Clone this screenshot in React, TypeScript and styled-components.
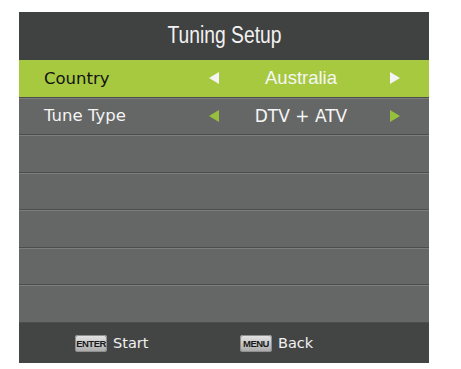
import React from 'react';
import styled, { createGlobalStyle } from 'styled-components';

const GlobalStyle = createGlobalStyle`
    html, body {
        margin: 0;
        padding: 0;
        background: #ffffff;
    }
`;

const Page = styled.div`
    width: 461px;
    height: 369px;
    padding: 12px 0 0 19px;
    box-sizing: border-box;
`;

const Panel = styled.div`
    width: 410px;
    display: flex;
    flex-direction: column;
    background: #656666;
`;

const Header = styled.div`
    height: 48px;
    display: flex;
    align-items: center;
    justify-content: center;
    background: #404141;
    padding-bottom: 2px;
    box-sizing: border-box;
`;

// narrow TV-menu face, squeezed from Liberation Sans
const Title = styled.span`
    display: inline-block;
    color: #f2f2f2;
    font-family: "Liberation Sans", Arial, sans-serif;
    font-size: 23.5px;
    transform: scaleX(0.82);
`;

const List = styled.div`
    height: 263px;
    display: grid;
    grid-template-rows: repeat(7, 1fr);
`;

const Row = styled.div<{ active?: boolean }>`
    display: grid;
    grid-template-columns: 165px 11px 1fr 11px;
    align-items: center;
    padding: 0 24px 0 25px;
    background: ${props => props.active ? '#a6c93f' : '#656666'};
    border-bottom: 1px solid #4c4d4d;
    box-shadow: inset 0 1px 0 ${props => props.active ? '#a6c93f' : '#7c7d7d'};
    color: ${props => props.active ? '#111111' : '#f4f4f4'};
    font-family: "DejaVu Sans", Verdana, sans-serif;
    font-size: 16.5px;
`;

const Value = styled.div<{ narrow?: boolean }>`
    text-align: center;
    padding-right: 12px;
    color: #f6f6f6;
    font-family: ${props => props.narrow ? '"DejaVu Sans", Verdana, sans-serif' : '"Liberation Sans", Arial, sans-serif'};
    font-size: ${props => props.narrow ? '17px' : '18.5px'};
`;

const Arrow = styled.div<{ dir: 'left' | 'right'; color: string }>`
    width: 0;
    height: 0;
    border-top: 6.5px solid transparent;
    border-bottom: 6.5px solid transparent;
    ${props => props.dir === 'left'
        ? `border-right: 10px solid ${props.color};`
        : `border-left: 10px solid ${props.color}; margin-left: -4px;`}
`;

const Footer = styled.div`
    height: 40px;
    display: flex;
    align-items: center;
    padding-left: 56px;
    background: #434444;
    font-family: "DejaVu Sans", Verdana, sans-serif;
    font-size: 14.5px;
    color: #f2f2f2;
`;

const Hint = styled.div<{ width: number }>`
    width: ${props => props.width}px;
    display: flex;
    align-items: center;
    gap: 6px;
`;

const Key = styled.span`
    display: inline-flex;
    align-items: center;
    justify-content: center;
    width: 32px;
    height: 17px;
    border-radius: 3px;
    background: linear-gradient(#e6e6e6, #a8a8a8);
    box-shadow: inset 0 0 0 1px #8f8f8f;
    color: #1a1a1a;
    font-family: "Liberation Sans", Arial, sans-serif;
    font-weight: bold;
    font-size: 9.5px;
    letter-spacing: -0.5px;
    overflow: hidden;
`;

const rows = [
    { label: 'Country', value: 'Australia', active: true },
    { label: 'Tune Type', value: 'DTV + ATV', active: false },
];

export default function App() {
    return (
        <Page>
            <GlobalStyle />
            <Panel>
                <Header><Title>Tuning Setup</Title></Header>
                <List>
                    {rows.map(r => (
                        <Row key={r.label} active={r.active}>
                            <span>{r.label}</span>
                            <Arrow dir="left" color={r.active ? '#f4f4f4' : '#96c03c'} />
                            <Value narrow={!r.active}>{r.value}</Value>
                            <Arrow dir="right" color={r.active ? '#f4f4f4' : '#96c03c'} />
                        </Row>
                    ))}
                    {[0, 1, 2, 3, 4].map(i => <Row key={i} />)}
                </List>
                <Footer>
                    <Hint width={165}><Key>ENTER</Key>Start</Hint>
                    <Hint width={100}><Key>MENU</Key>Back</Hint>
                </Footer>
            </Panel>
        </Page>
    );
}
